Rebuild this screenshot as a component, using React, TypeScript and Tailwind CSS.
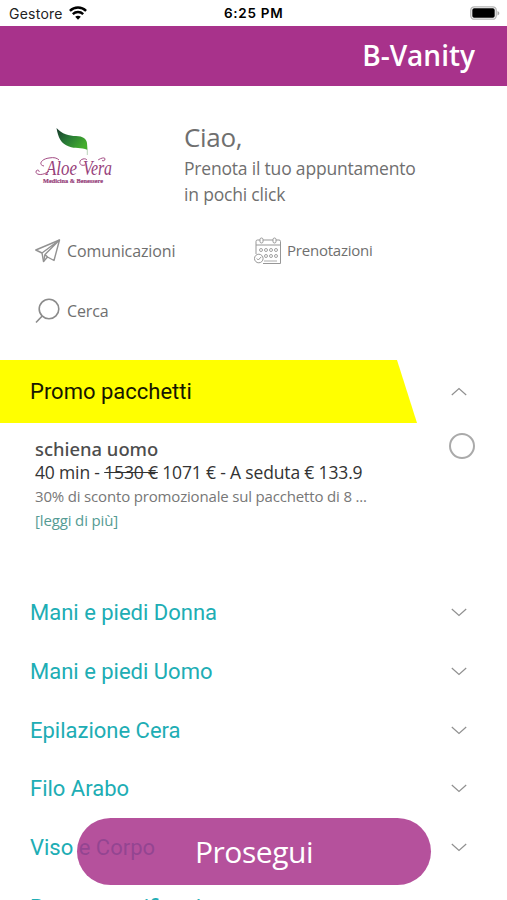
import { useState } from 'react';

const categories = [
  'Mani e piedi Donna',
  'Mani e piedi Uomo',
  'Epilazione Cera',
  'Filo Arabo',
  'Viso e Corpo',
  'Retomo tonificazione',
];

function StatusBar() {
  return (
    <div className="relative flex h-[26px] items-center justify-between bg-white pl-[9px] pr-[7px] font-['Inter'] text-black">
      <div className="flex items-center gap-1.5 text-[14px]">
        <span className="tracking-[0.25px] text-[#222]">Gestore</span>
        <svg width="18" height="14" viewBox="0 0 18 14" fill="none" stroke="currentColor" strokeWidth="2.4">
          <path d="M0.9 4.9C5.5 0.4 12.5 0.4 17.1 4.9" />
          <path d="M3.8 8.1C6.8 5.3 11.2 5.3 14.2 8.1" />
          <path d="M6.2 10.8C7.8 9.3 10.2 9.3 11.8 10.8L9 13.7Z" fill="currentColor" stroke="none" />
        </svg>
      </div>
      <span className="absolute left-[224px] text-[13.5px] font-semibold tracking-[0.7px]">6:25 PM</span>
      <svg width="30" height="14" viewBox="0 0 30 14">
        <rect x="0.8" y="0.8" width="25.4" height="12.4" rx="3.5" fill="#fff" stroke="#b5b5b5" strokeWidth="1.3" />
        <rect x="2.3" y="2.3" width="22.4" height="9.4" rx="1.8" fill="#000" />
        <path d="M27.5 5v4.5c2.4-.8 2.4-3.7 0-4.5z" fill="#aaa" />
      </svg>
    </div>
  );
}

function Logo() {
  return (
    <svg className="overflow-visible" width="84" height="62" viewBox="0 0 84 62">
      <defs>
        <linearGradient id="leaf" x1="0" y1="0" x2="1" y2="0.6">
          <stop offset="0" stopColor="#183a2c" />
          <stop offset="0.5" stopColor="#287a36" />
          <stop offset="1" stopColor="#43ad2c" />
        </linearGradient>
      </defs>
      <path d="M21.5 1C27 7 34 9 41 9C48 9 51.5 12 52 16L52.5 23C46 20 40 22 34 19.5C26 17 23 10 21.5 1Z" fill="url(#leaf)" />
      <path d="M52.3 22V28" stroke="#b9d4b9" strokeWidth="1" />
      <g fill="none" stroke="#a34c84" strokeWidth="1">
        <path d="M14 44C8 49 1 48 1 45C1 42 5 43 4 45" />
        <path d="M9 39C3 38 6 32 14 31C19 30 22 31 24 33" />
        <path d="M50 38C44 40 43 33 48 32C50 31.500 51 32 52 33" />
        <path d="M63 33C66 31 70 30 70 32C70 34 68 34 67 33.500" />
      </g>
      <g fontFamily="Liberation Serif, serif" fill="#96407a">
        <text x="11" y="47.5" fontSize="20" fontStyle="italic" textLength="31" lengthAdjust="spacingAndGlyphs">
          Aloe
        </text>
        <text x="48" y="47.5" fontSize="20" fontStyle="italic" textLength="29" lengthAdjust="spacingAndGlyphs">
          Vera
        </text>
        <text x="8" y="56" fontSize="6.5" fontWeight="700" textLength="60" lengthAdjust="spacingAndGlyphs" stroke="#96407a" strokeWidth="0.2">
          Medicina &amp; Benessere
        </text>
      </g>
    </svg>
  );
}

function PlaneIcon() {
  return (
    <svg width="26" height="24" viewBox="0 0 26 24" fill="none" stroke="#929292" strokeWidth="1.4" strokeLinejoin="round">
      <path d="M24.5 1L0.8 11L7 14L8.5 22.5L12.5 18L19 21.5Z" />
      <path d="M24.5 1L7 14M24.5 1L10 15.5L8.5 22.5M10 15.5L12.5 18" />
    </svg>
  );
}

function CalendarIcon() {
  return (
    <svg width="28" height="28" viewBox="0 0 28 28" fill="none" stroke="#979797" strokeWidth="1">
      <path d="M6 3H3.5Q2 3 2 4.5V17M9 3H19M22 3H25Q26.500 3 26.5 4.5V26.5H9M2 8H26.5" />
      <rect x="6" y="1" width="3" height="5" rx="1.5" />
      <rect x="19" y="1" width="3" height="5" rx="1.5" />
      <g strokeWidth="0.9">
        {[7, 12, 17, 22].map((x) => (
          <circle key={x} cx={x} cy="13" r="1.5" />
        ))}
        {[12, 17, 22].map((x) => (
          <circle key={x} cx={x} cy="19" r="1.5" />
        ))}
      </g>
      <path d="M10 24H23" strokeWidth="0.8" />
      <circle cx="4.8" cy="21.5" r="4.3" fill="#fff" />
      <path d="M2.8 21.5L4.3 23L7.3 19.8" />
    </svg>
  );
}

function SearchIcon() {
  return (
    <svg width="26" height="26" viewBox="0 0 26 26" fill="none" stroke="#8b8b8b" strokeWidth="1.6">
      <circle cx="14" cy="11" r="9.8" />
      <path d="M7.2 18L1 24.5" />
    </svg>
  );
}

function Chevron({ up = false }: { up?: boolean }) {
  return (
    <svg className={up ? 'rotate-180' : ''} width="16" height="9" viewBox="0 0 16 9" fill="none" stroke="#909090" strokeWidth="1.2">
      <path d="M0.8 1L8 7.5L15.2 1" />
    </svg>
  );
}

export default function App() {
  const [open, setOpen] = useState(true);
  const [selected, setSelected] = useState(false);

  return (
    <div className="relative h-[900px] w-[507px] overflow-hidden bg-white font-['Open_Sans',sans-serif] text-[#6f6f6f]">
      <StatusBar />
      <header className="flex h-[60px] items-center justify-end bg-[#a8328b] pb-[3px] pr-8">
        <h1 className="text-[28px] font-semibold leading-none text-white">B-Vanity</h1>
      </header>

      <section className="flex h-[137px] pl-[35px] pt-[35px]">
        <div className="w-[149px] pt-[6px]">
          <Logo />
        </div>
        <div>
          <h2 className="text-[26px] leading-[33px] tracking-[-0.3px]">Ciao,</h2>
          <p className="w-[250px] whitespace-nowrap pt-px text-[17.5px] leading-[26px] tracking-[-0.19px]">
            Prenota il tuo appuntamento
            <br />
            in pochi click
          </p>
        </div>
      </section>

      <nav className="grid h-[137px] grid-cols-[219px_1fr] grid-rows-[56px_64px] items-center pl-[35px] text-[16px] tracking-[-0.1px]">
        <button className="flex items-center gap-1.5">
          <PlaneIcon />
          <span className="-mt-px">Comunicazioni</span>
        </button>
        <button className="flex items-center gap-[5px] text-[15px] tracking-[-0.22px]">
          <CalendarIcon />
          <span className="-mt-px">Prenotazioni</span>
        </button>
        <button className="flex items-center gap-1.5">
          <SearchIcon />
          <span className="-mt-px">Cerca</span>
        </button>
      </nav>

      <button
        onClick={() => setOpen(!open)}
        className="flex h-[63px] w-full items-center justify-between pr-10 font-['Roboto'] text-[22px] text-[#161600]"
      >
        <span className="flex h-full w-[417px] items-center bg-[#ffff00] pl-[30px] [clip-path:polygon(0_0,397px_0,100%_100%,0_100%)]">
          Promo pacchetti
        </span>
        <Chevron up={open} />
      </button>

      {open && (
        <section className="flex h-[160.5px] justify-between pl-[35px] pr-8 pt-[13px]">
          <div className="whitespace-nowrap">
            <h3 className="font-['Noto_Sans'] text-[18.4px] font-medium leading-[25px] text-[#4d4d4d]">schiena uomo</h3>
            <p className="-mt-px text-[17.5px] leading-[24px] tracking-[-0.16px] text-[#333]">
              40 min - <s>1530 €</s> 1071 € - A seduta € 133.9
            </p>
            <p className="text-[15px] leading-[24px] tracking-[-0.17px] text-[#777]">
              30% di sconto promozionale sul pacchetto di 8 ...
            </p>
            <button className="block text-[15px] leading-[24px] tracking-[-0.14px] text-[#559b94]">[leggi di più]</button>
          </div>
          <button
            aria-label="schiena uomo"
            onClick={() => setSelected(!selected)}
            className={`mt-[-3px] size-[26px] rounded-full border-2 border-[#aaa] ${selected ? 'bg-[#a8328b]' : ''}`}
          />
        </section>
      )}

      <div className="font-['Roboto'] text-[22px] text-[#20adb4]">
        {categories.map((category) => (
          <button key={category} className="flex h-[58.7px] w-full items-center justify-between pl-[30px] pr-10 last:h-[61px]">
            {category}
            <Chevron />
          </button>
        ))}
      </div>

      <button className="absolute left-[77px] top-[818px] h-[67px] w-[354px] rounded-full bg-[#a8328b]/85 text-[30px] tracking-[-0.45px] text-white">
        Prosegui
      </button>
    </div>
  );
}
